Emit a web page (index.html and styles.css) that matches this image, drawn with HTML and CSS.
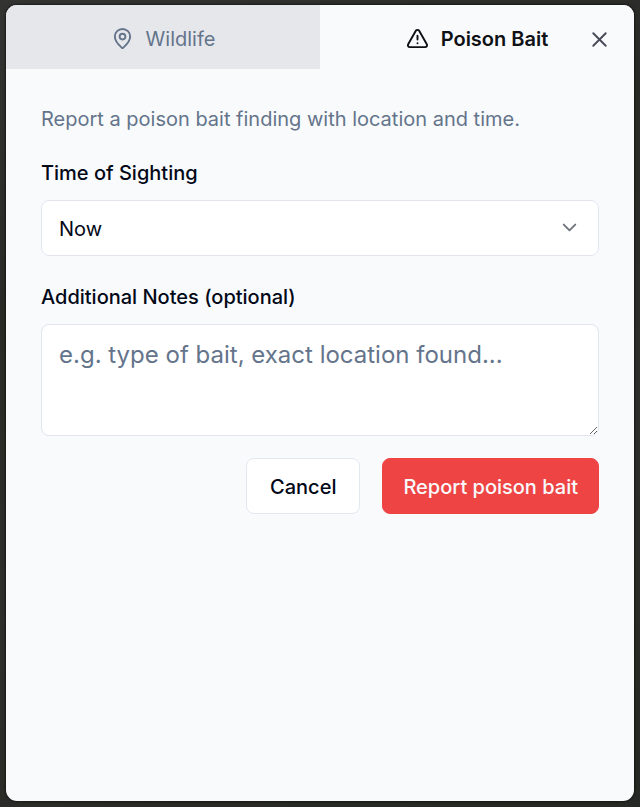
FILE: index.html
```html
<!DOCTYPE html>
<html lang="en">
<head>
    <meta charset="UTF-8">
    <meta name="viewport" content="width=device-width, initial-scale=1.0">
    <title>Report Poison Bait</title>
    <link rel="stylesheet" href="styles.css">
</head>
<body>
    <div class="dialog" role="dialog" aria-label="Report">
        <div class="tabs" role="tablist">
            <button type="button" class="tab" role="tab" aria-selected="false">
                <svg class="icon" viewBox="0 0 24 24" aria-hidden="true">
                    <path d="M20 10c0 4.993-5.539 10.193-7.399 11.799a1 1 0 0 1-1.202 0C9.539 20.193 4 14.993 4 10a8 8 0 0 1 16 0"/>
                    <circle cx="12" cy="10" r="3"/>
                </svg>
                Wildlife
            </button>
            <button type="button" class="tab tab-active" role="tab" aria-selected="true">
                <svg class="icon" viewBox="0 0 24 24" aria-hidden="true">
                    <path d="m21.73 18-8-14a2 2 0 0 0-3.48 0l-8 14A2 2 0 0 0 4 21h16a2 2 0 0 0 1.73-3"/>
                    <path d="M12 9v4"/>
                    <path d="M12 17h.01"/>
                </svg>
                Poison Bait
            </button>
        </div>
        <button type="button" class="close" aria-label="Close">
            <svg class="icon" viewBox="0 0 24 24" aria-hidden="true">
                <path d="M18.5 5.5l-13 13"/>
                <path d="m5.5 5.5 13 13"/>
            </svg>
        </button>

        <form class="report-form">
            <p class="description">Report a poison bait finding with location and time.</p>
            <div class="form-group">
                <label for="sightingTime">Time of Sighting</label>
                <div class="select-wrap">
                    <select id="sightingTime" class="field">
                        <option>Now</option>
                    </select>
                    <svg class="icon chevron" viewBox="0 0 24 24" aria-hidden="true">
                        <path d="m6 9 6 6 6-6"/>
                    </svg>
                </div>
            </div>
            <div class="form-group">
                <label for="notes">Additional Notes (optional)</label>
                <textarea id="notes" class="field notes" placeholder="e.g. type of bait, exact location found..."></textarea>
            </div>
            <div class="actions">
                <button type="button" class="btn">Cancel</button>
                <button type="submit" class="btn btn-danger">Report poison bait</button>
            </div>
        </form>
    </div>
</body>
</html>
```
FILE: styles.css
```css
* {
    box-sizing: border-box;
}
body {
    margin: 0;
    min-height: 100vh;
    padding: 5px 6px 6px;
    display: flex;
    background: linear-gradient(160deg, #333331, #292a26 30%, #2e2e2b 60%, #262823);
    font-family: Inter, sans-serif;
    font-size: 20px;
    line-height: 28px;
    color: #020817;
}
button, select, textarea {
    font: inherit;
    color: inherit;
}
.dialog {
    position: relative;
    flex: 1;
    background: #f8fafc;
    border-radius: 11px;
    overflow: hidden;
    box-shadow: 0 0 3px #000;
}
.tabs {
    display: grid;
    grid-template-columns: 1fr 1fr;
}
.tab {
    display: flex;
    align-items: center;
    justify-content: center;
    gap: 12px;
    height: 64px;
    padding: 3px 0 0;
    border: none;
    background: #e5e7eb;
    color: #64748b;
    cursor: pointer;
}
.tab-active {
    background: #f8fafc;
    color: #0f1115;
    font-weight: 600;
}
.icon {
    width: 23px;
    height: 23px;
    fill: none;
    stroke: currentColor;
    stroke-width: 2;
    stroke-linecap: round;
    stroke-linejoin: round;
}
.close {
    position: absolute;
    top: 23px;
    right: 23px;
    display: flex;
    padding: 0;
    border: none;
    background: none;
    color: #474b57;
    cursor: pointer;
}
.report-form {
    padding: 36px 35px;
}
.description {
    margin: 0 0 26px;
    color: #64748b;
}
.form-group label {
    display: block;
    margin-bottom: 13px;
    font-weight: 500;
}
.form-group + .form-group {
    margin-top: 27px;
}
.field {
    display: block;
    width: 100%;
    height: 56px;
    padding: 2px 17px 0;
    border: 1px solid #e2e4ee;
    border-radius: 8px;
    background: #fff;
    appearance: none;
}
.select-wrap {
    position: relative;
}
.chevron {
    position: absolute;
    top: 16px;
    right: 18px;
    color: #71757f;
    pointer-events: none;
}
.notes {
    height: 112px;
    padding: 12px 17px;
    font-size: 24px;
    line-height: 36px;
    resize: vertical;
}
.notes::placeholder {
    color: #64748b;
}
.actions {
    display: flex;
    justify-content: flex-end;
    gap: 22px;
    margin-top: 22px;
}
.btn {
    height: 56px;
    padding: 2px 23px 0;
    border: 1px solid #e2e8f0;
    border-radius: 8px;
    background: #fff;
    font-weight: 500;
    cursor: pointer;
}
.btn-danger {
    padding: 2px 20px 0;
    border-color: #ef4444;
    background: #ef4444;
    color: #f8fafc;
}
```
